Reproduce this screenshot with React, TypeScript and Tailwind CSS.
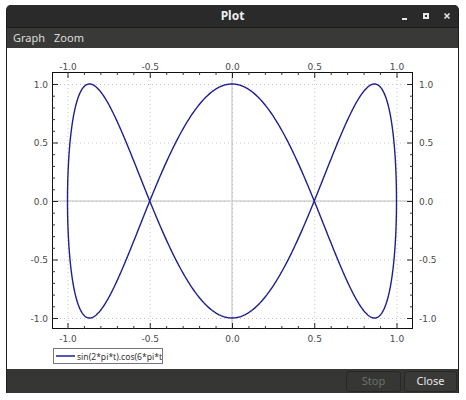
import React from "react"

// plot geometry (svg coords inside the white client area)
const X0 = 225
const SX = 164.5
const Y0 = 153
const SY = 117
const BOX = { l: 45, t: 24, r: 406, b: 281 }

const px = (x: number) => X0 + SX * x
const py = (y: number) => Y0 - SY * y

function curvePath() {
  const pts: string[] = []
  const n = 1200
  for (let i = 0; i <= n; i++) {
    const t = i / n
    const x = Math.sin(2 * Math.PI * t)
    const y = Math.cos(6 * Math.PI * t)
    pts.push(`${i === 0 ? "M" : "L"}${px(x).toFixed(2)},${py(y).toFixed(2)}`)
  }
  return pts.join(" ")
}

const majors = [-1, -0.5, 0, 0.5, 1]
const minors: number[] = []
for (let i = -10; i <= 10; i++) {
  if (i % 5 !== 0) minors.push(i / 10)
}
const fmt = (v: number) => v.toFixed(1)

function Plot() {
  const labelCls = "fill-[#4a4a4a]"
  return (
    <svg width="451" height="321" className="block" style={{ fontFamily: "'DejaVu Sans', sans-serif" }}>
      <defs>
        <clipPath id="legendClip">
          <rect x="46" y="300" width="109" height="15" />
        </clipPath>
        <clipPath id="boxClip">
          <rect x={BOX.l} y={BOX.t} width={BOX.r - BOX.l} height={BOX.b - BOX.t} />
        </clipPath>
      </defs>

      {/* zero lines */}
      <line x1={px(0)} y1={BOX.t} x2={px(0)} y2={BOX.b} stroke="#dedede" strokeWidth="2" />
      <line x1={BOX.l} y1={py(0)} x2={BOX.r} y2={py(0)} stroke="#dedede" strokeWidth="2" />

      {/* dotted grid */}
      {majors.map((v) => (
        <g key={"g" + v}>
          <line x1={px(v) + 0.5} y1={BOX.t} x2={px(v) + 0.5} y2={BOX.b} stroke="#c4c4c4" strokeWidth="1" strokeDasharray="1 3" />
          <line x1={BOX.l} y1={py(v) + 0.5} x2={BOX.r} y2={py(v) + 0.5} stroke="#c4c4c4" strokeWidth="1" strokeDasharray="1 3" />
        </g>
      ))}

      {/* curve */}
      <path d={curvePath()} fill="none" stroke="#1f1f8f" strokeWidth="1.4" clipPath="url(#boxClip)" />

      {/* frame */}
      <rect x={BOX.l + 0.5} y={BOX.t + 0.5} width={BOX.r - BOX.l - 1} height={BOX.b - BOX.t - 1} fill="none" stroke="#111" strokeWidth="1" />

      {/* ticks */}
      {majors.map((v) => (
        <g key={"M" + v} stroke="#222" strokeWidth="1">
          <line x1={px(v) + 0.5} y1={BOX.t} x2={px(v) + 0.5} y2={BOX.t + 6} />
          <line x1={px(v) + 0.5} y1={BOX.b} x2={px(v) + 0.5} y2={BOX.b - 6} />
          <line x1={BOX.l} y1={py(v) + 0.5} x2={BOX.l + 6} y2={py(v) + 0.5} />
          <line x1={BOX.r} y1={py(v) + 0.5} x2={BOX.r - 6} y2={py(v) + 0.5} />
        </g>
      ))}
      {minors.map((v) => (
        <g key={"m" + v} stroke="#333" strokeWidth="1">
          <line x1={px(v) + 0.5} y1={BOX.t} x2={px(v) + 0.5} y2={BOX.t + 3} />
          <line x1={px(v) + 0.5} y1={BOX.b} x2={px(v) + 0.5} y2={BOX.b - 3} />
          <line x1={BOX.l} y1={py(v) + 0.5} x2={BOX.l + 3} y2={py(v) + 0.5} />
          <line x1={BOX.r} y1={py(v) + 0.5} x2={BOX.r - 3} y2={py(v) + 0.5} />
        </g>
      ))}

      {/* labels */}
      {majors.map((v) => (
        <g key={"l" + v} fontSize="9" className={labelCls}>
          <text x={px(v) + 0.5} y={BOX.t - 2} textAnchor="middle">{fmt(v)}</text>
          <text x={px(v) + 0.5} y={BOX.b + 13} textAnchor="middle">{fmt(v)}</text>
          <text x={BOX.l - 4} y={py(v) + 3.5} textAnchor="end">{fmt(v)}</text>
          <text x={BOX.r + 6} y={py(v) + 3.5} textAnchor="start">{fmt(v)}</text>
        </g>
      ))}

      {/* legend */}
      <rect x="46.5" y="300.5" width="109" height="15" fill="#fff" stroke="#777" />
      <g clipPath="url(#legendClip)">
        <line x1="49" y1="308" x2="68" y2="308" stroke="#1f1f8f" strokeWidth="1.4" />
        <text x="70" y="311.5" fontSize="8.6" className="fill-[#333]" style={{ fontFamily: "'Noto Sans', sans-serif" }}>
          sin(2*pi*t).cos(6*pi*t)
        </text>
      </g>
    </svg>
  )
}

export default function App() {
  return (
    <div className="w-[466px] h-[400px] bg-white pt-[5px] pl-[6px]" style={{ fontFamily: "'Noto Sans', 'Open Sans', sans-serif" }}>
      <div className="w-[453px] h-[388px] flex flex-col rounded-t-[5px] overflow-hidden bg-[#2c2c2c] border-x border-[#1e1e1e]">
        {/* title bar */}
        <div className="h-[23px] shrink-0 relative flex items-center justify-center bg-[#2a2a2a] border-b border-[#1c1c1c]">
          <span className="text-[12px] font-bold text-[#eeeeee] leading-none">Plot</span>
          <div className="absolute right-[7px] top-0 h-full flex items-center gap-[13px]">
            <svg width="8" height="8" viewBox="0 0 8 8">
              <rect x="1" y="6" width="5" height="2" fill="#e6e6e6" />
            </svg>
            <svg width="8" height="8" viewBox="0 0 8 8">
              <rect x="1" y="1" width="6" height="6" fill="#e6e6e6" />
              <rect x="3" y="3" width="2" height="2" fill="#2a2a2a" />
            </svg>
            <svg width="8" height="8" viewBox="0 0 8 8">
              <path d="M1.5 1.5 L6.5 6.5 M6.5 1.5 L1.5 6.5" stroke="#e6e6e6" strokeWidth="1.6" />
            </svg>
          </div>
        </div>
        {/* menu bar */}
        <div className="h-[20px] shrink-0 flex items-center gap-[9px] px-[6px] bg-[#393a38] text-[11px] text-[#dddddd]">
          <span>Graph</span>
          <span>Zoom</span>
        </div>
        {/* client area */}
        <div className="h-[321px] shrink-0 bg-white">
          <Plot />
        </div>
        {/* bottom bar */}
        <div className="flex-1 flex items-center justify-end gap-[3px] pr-[1px] bg-[#363735]">
          <button className="w-[55px] h-[21px] rounded-[3px] border border-[#272827] text-[11px] text-[#6f706e] bg-[#363735]">Stop</button>
          <button className="w-[53px] h-[21px] rounded-[3px] border border-[#272827] text-[11px] text-[#e8e8e8] bg-[#393a38]">Close</button>
        </div>
      </div>
    </div>
  )
}
